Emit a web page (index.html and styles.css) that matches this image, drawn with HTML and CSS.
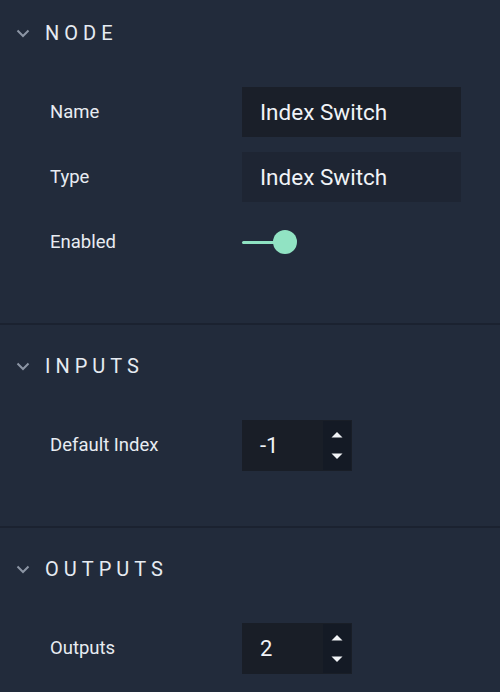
FILE: index.html
```html
<!DOCTYPE html>
<html>
<head>
<meta charset="utf-8">
<link rel="stylesheet" href="styles.css">
</head>
<body>
<div class="panel">
  <section class="section first">
    <div class="header">
      <svg class="chev" width="14" height="9" viewBox="0 0 14 9"><polyline points="1.5,1.5 7,7 12.5,1.5" fill="none" stroke="#8c95a4" stroke-width="2"/></svg>
      <span class="title">NODE</span>
    </div>
    <div class="rows">
      <div class="row"><span class="label">Name</span><div class="field">Index Switch</div></div>
      <div class="row"><span class="label">Type</span><div class="field disabled">Index Switch</div></div>
      <div class="row"><span class="label">Enabled</span>
        <div class="toggle"><div class="track"></div><div class="knob"></div></div>
      </div>
    </div>
  </section>
  <section class="section">
    <div class="header">
      <svg class="chev" width="14" height="9" viewBox="0 0 14 9"><polyline points="1.5,1.5 7,7 12.5,1.5" fill="none" stroke="#8c95a4" stroke-width="2"/></svg>
      <span class="title">INPUTS</span>
    </div>
    <div class="rows">
      <div class="row"><span class="label">Default Index</span>
        <div class="number"><span class="value">-1</span>
          <div class="spin">
            <svg width="12" height="7" viewBox="0 0 12 7"><polygon points="0.5,6.5 6,1 11.5,6.5" fill="#f2f4f7"/></svg>
            <svg width="12" height="7" viewBox="0 0 12 7"><polygon points="0.5,0.5 6,6 11.5,0.5" fill="#f2f4f7"/></svg>
          </div>
        </div>
      </div>
    </div>
  </section>
  <section class="section">
    <div class="header">
      <svg class="chev" width="14" height="9" viewBox="0 0 14 9"><polyline points="1.5,1.5 7,7 12.5,1.5" fill="none" stroke="#8c95a4" stroke-width="2"/></svg>
      <span class="title">OUTPUTS</span>
    </div>
    <div class="rows">
      <div class="row"><span class="label">Outputs</span>
        <div class="number"><span class="value">2</span>
          <div class="spin">
            <svg width="12" height="7" viewBox="0 0 12 7"><polygon points="0.5,6.5 6,1 11.5,6.5" fill="#f2f4f7"/></svg>
            <svg width="12" height="7" viewBox="0 0 12 7"><polygon points="0.5,0.5 6,6 11.5,0.5" fill="#f2f4f7"/></svg>
          </div>
        </div>
      </div>
    </div>
  </section>
</div>
</body>
</html>
```
FILE: styles.css
```css
html, body {
  margin: 0;
  padding: 0;
  background: #222b3b;
  font-family: Roboto, "Liberation Sans", sans-serif;
  color: #e8ecf2;
}
.panel {
  width: 500px;
  height: 692px;
  overflow: hidden;
}
.section {
  padding: 28px 0 56px;
  border-bottom: 2px solid #1b2230;
}
.section.first {
  padding-top: 20px;
}
.header {
  display: flex;
  align-items: center;
  height: 26px;
}
.chev {
  margin-left: 16px;
  margin-right: 15px;
}
.title {
  font-size: 20px;
  letter-spacing: 5px;
  color: #e6ebf2;
}
.rows {
  margin-top: 41px;
  display: flex;
  flex-direction: column;
  gap: 15px;
}
.row {
  display: flex;
  align-items: center;
  height: 50px;
}
.label {
  width: 192px;
  padding-left: 50px;
  font-size: 18.5px;
  color: #e8ecf2;
}
.field {
  width: 201px;
  height: 50px;
  padding-left: 18px;
  display: flex;
  align-items: center;
  background: #1a1f29;
  font-size: 22.5px;
  color: #f0f3f7;
}
.field.disabled {
  background: #1e2533;
}
.toggle {
  position: relative;
  width: 56px;
  height: 24px;
}
.track {
  position: absolute;
  left: 0;
  top: 10.5px;
  width: 34px;
  height: 3px;
  background: #8fe2c2;
  border-radius: 2px;
}
.knob {
  position: absolute;
  left: 31px;
  top: 0;
  width: 24px;
  height: 24px;
  border-radius: 50%;
  background: #91e3c3;
}
.number {
  width: 110px;
  height: 51px;
  display: flex;
  background: #191e27;
}
.value {
  flex: 1;
  padding-left: 18px;
  display: flex;
  align-items: center;
  font-size: 22px;
  color: #f0f3f7;
}
.spin {
  width: 28px;
  margin: 1px 1px 1px 0;
  background: #141a25;
  display: flex;
  flex-direction: column;
  align-items: center;
  justify-content: center;
  gap: 15px;
}
```
